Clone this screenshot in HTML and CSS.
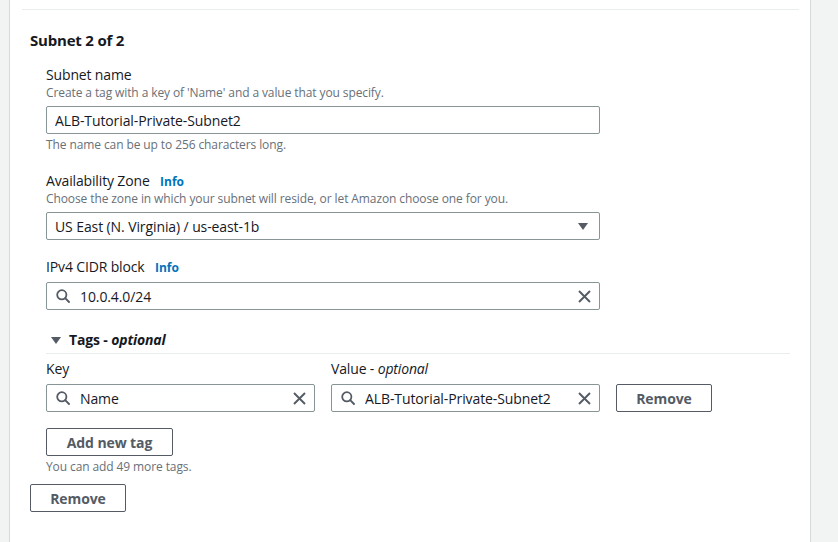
FILE: index.html
```html
<!DOCTYPE html>
<html>
<head>
<meta charset="utf-8">
<link rel="stylesheet" href="styles.css">
</head>
<body>
<div class="card">
  <div class="top-rule"></div>
  <h2 class="heading">Subnet 2 of 2</h2>
  <div class="fields">
    <div class="field">
      <div class="label">Subnet name</div>
      <div class="desc">Create a tag with a key of 'Name' and a value that you specify.</div>
      <div class="control input"><span class="val">ALB-Tutorial-Private-Subnet2</span></div>
      <div class="hint">The name can be up to 256 characters long.</div>
    </div>
    <div class="field">
      <div class="label">Availability Zone <a class="info">Info</a></div>
      <div class="desc">Choose the zone in which your subnet will reside, or let Amazon choose one for you.</div>
      <div class="control input select"><span class="val">US East (N. Virginia) / us-east-1b</span>
        <svg class="caret" width="10" height="7" viewBox="0 0 10 7"><path d="M0 0H10L5 7Z" fill="#545b64"/></svg>
      </div>
    </div>
    <div class="field">
      <div class="label">IPv4 CIDR block <a class="info">Info</a></div>
      <div class="control input search">
        <svg class="mag" width="14" height="14" viewBox="0 0 14 14"><circle cx="5.8" cy="5.8" r="4.6" fill="none" stroke="#545b64" stroke-width="1.8"/><path d="M9.2 9.2L13 13" stroke="#545b64" stroke-width="1.9" stroke-linecap="round"/></svg>
        <span class="val">10.0.4.0/24</span>
        <svg class="clear" width="13" height="13" viewBox="0 0 13 13"><path d="M1 1L12 12M12 1L1 12" stroke="#545b64" stroke-width="1.9"/></svg>
      </div>
    </div>
    <div class="tags">
      <div class="tags-head">
        <svg class="tri" width="10" height="7" viewBox="0 0 10 7"><path d="M0 0H10L5 7Z" fill="#545b64"/></svg>
        <span>Tags - <i>optional</i></span>
      </div>
      <div class="tag-row">
        <div class="tag-col">
          <div class="label">Key</div>
          <div class="control input search">
            <svg class="mag" width="14" height="14" viewBox="0 0 14 14"><circle cx="5.8" cy="5.8" r="4.6" fill="none" stroke="#545b64" stroke-width="1.8"/><path d="M9.2 9.2L13 13" stroke="#545b64" stroke-width="1.9" stroke-linecap="round"/></svg>
            <span class="val">Name</span>
            <svg class="clear" width="13" height="13" viewBox="0 0 13 13"><path d="M1 1L12 12M12 1L1 12" stroke="#545b64" stroke-width="1.9"/></svg>
          </div>
        </div>
        <div class="tag-col">
          <div class="label">Value - <i>optional</i></div>
          <div class="control input search">
            <svg class="mag" width="14" height="14" viewBox="0 0 14 14"><circle cx="5.8" cy="5.8" r="4.6" fill="none" stroke="#545b64" stroke-width="1.8"/><path d="M9.2 9.2L13 13" stroke="#545b64" stroke-width="1.9" stroke-linecap="round"/></svg>
            <span class="val">ALB-Tutorial-Private-Subnet2</span>
            <svg class="clear" width="13" height="13" viewBox="0 0 13 13"><path d="M1 1L12 12M12 1L1 12" stroke="#545b64" stroke-width="1.9"/></svg>
          </div>
        </div>
        <button class="btn btn-remove-tag">Remove</button>
      </div>
      <button class="btn btn-add">Add new tag</button>
      <div class="hint">You can add 49 more tags.</div>
    </div>
  </div>
  <button class="btn btn-remove">Remove</button>
</div>
</body>
</html>
```

FILE: styles.css
```css
* { box-sizing: border-box; }
html, body { margin: 0; padding: 0; height: 100%; }
body {
  background: #f2f3f3;
  font-family: "Open Sans", "Noto Sans", sans-serif;
  color: #16191f;
  overflow: hidden;
}
.card {
  margin-left: 9px;
  width: 802px;
  height: 100%;
  background: #fff;
  border-left: 1px solid #d5dbdb;
  border-right: 1px solid #d5dbdb;
  padding-top: 9px;
}
.top-rule {
  height: 1px;
  background: #eaeded;
  margin: 0 11px 0 12px;
}
.heading {
  margin: 20px 0 0 20px;
  font-size: 15px;
  line-height: 20px;
  font-weight: 700;
  letter-spacing: -0.2px;
}
.fields {
  margin: 15px 0 0 36px;
}
.field { margin-bottom: 17px; }
.field:first-child { margin-bottom: 18px; }
.label {
  font-size: 14px;
  line-height: 20px;
  height: 20px;
  letter-spacing: -0.15px;
}
.info {
  font-size: 12px;
  line-height: 16px;
  font-weight: 700;
  color: #0073bb;
  margin-left: 7px;
  letter-spacing: 0;
}
.desc, .hint {
  font-size: 12px;
  line-height: 16px;
  color: #687078;
  letter-spacing: -0.1px;
}
.desc { margin-bottom: 5px; }
.label + .control { margin-top: 5px; }
.hint { margin-top: 3px; }
.control {
  width: 554px;
  height: 28px;
  border: 1px solid #879596;
  border-radius: 2px;
  display: flex;
  align-items: center;
  padding: 0 8px;
  font-size: 14px;
  letter-spacing: -0.1px;
}
.val { flex: 1; white-space: nowrap; overflow: hidden; }
.caret { margin-right: 3px; }
.mag { margin: 0 10px 0 1px; flex: none; }
.clear { flex: none; }
.tags { margin-top: 20px; }
.tags-head {
  display: flex;
  align-items: center;
  font-size: 14px;
  line-height: 20px;
  height: 24px;
  font-weight: 700;
  color: #16191f;
  padding-bottom: 3px;
  border-bottom: 1px solid #eaeded;
  width: 744px;
  letter-spacing: -0.15px;
}
.tags-head .tri { margin: 0 8px 0 5px; }
.tags-head i { font-weight: 700; }
.tag-row {
  display: flex;
  align-items: flex-end;
  gap: 16px;
  margin-top: 5px;
}
.tag-col .control { width: 269px; }
.btn {
  display: block;
  height: 28px;
  border: 1px solid #545b64;
  border-radius: 2px;
  background: #fff;
  color: #545b64;
  font-family: "Open Sans", "Noto Sans", sans-serif;
  font-size: 14px;
  font-weight: 700;
  padding: 0;
  letter-spacing: -0.1px;
}
.btn-remove-tag { width: 96px; }
.btn-add { width: 127px; margin-top: 16px; }
.tags .hint { margin-top: 3px; }
.btn-remove { width: 96px; margin: 9px 0 0 20px; }
```
